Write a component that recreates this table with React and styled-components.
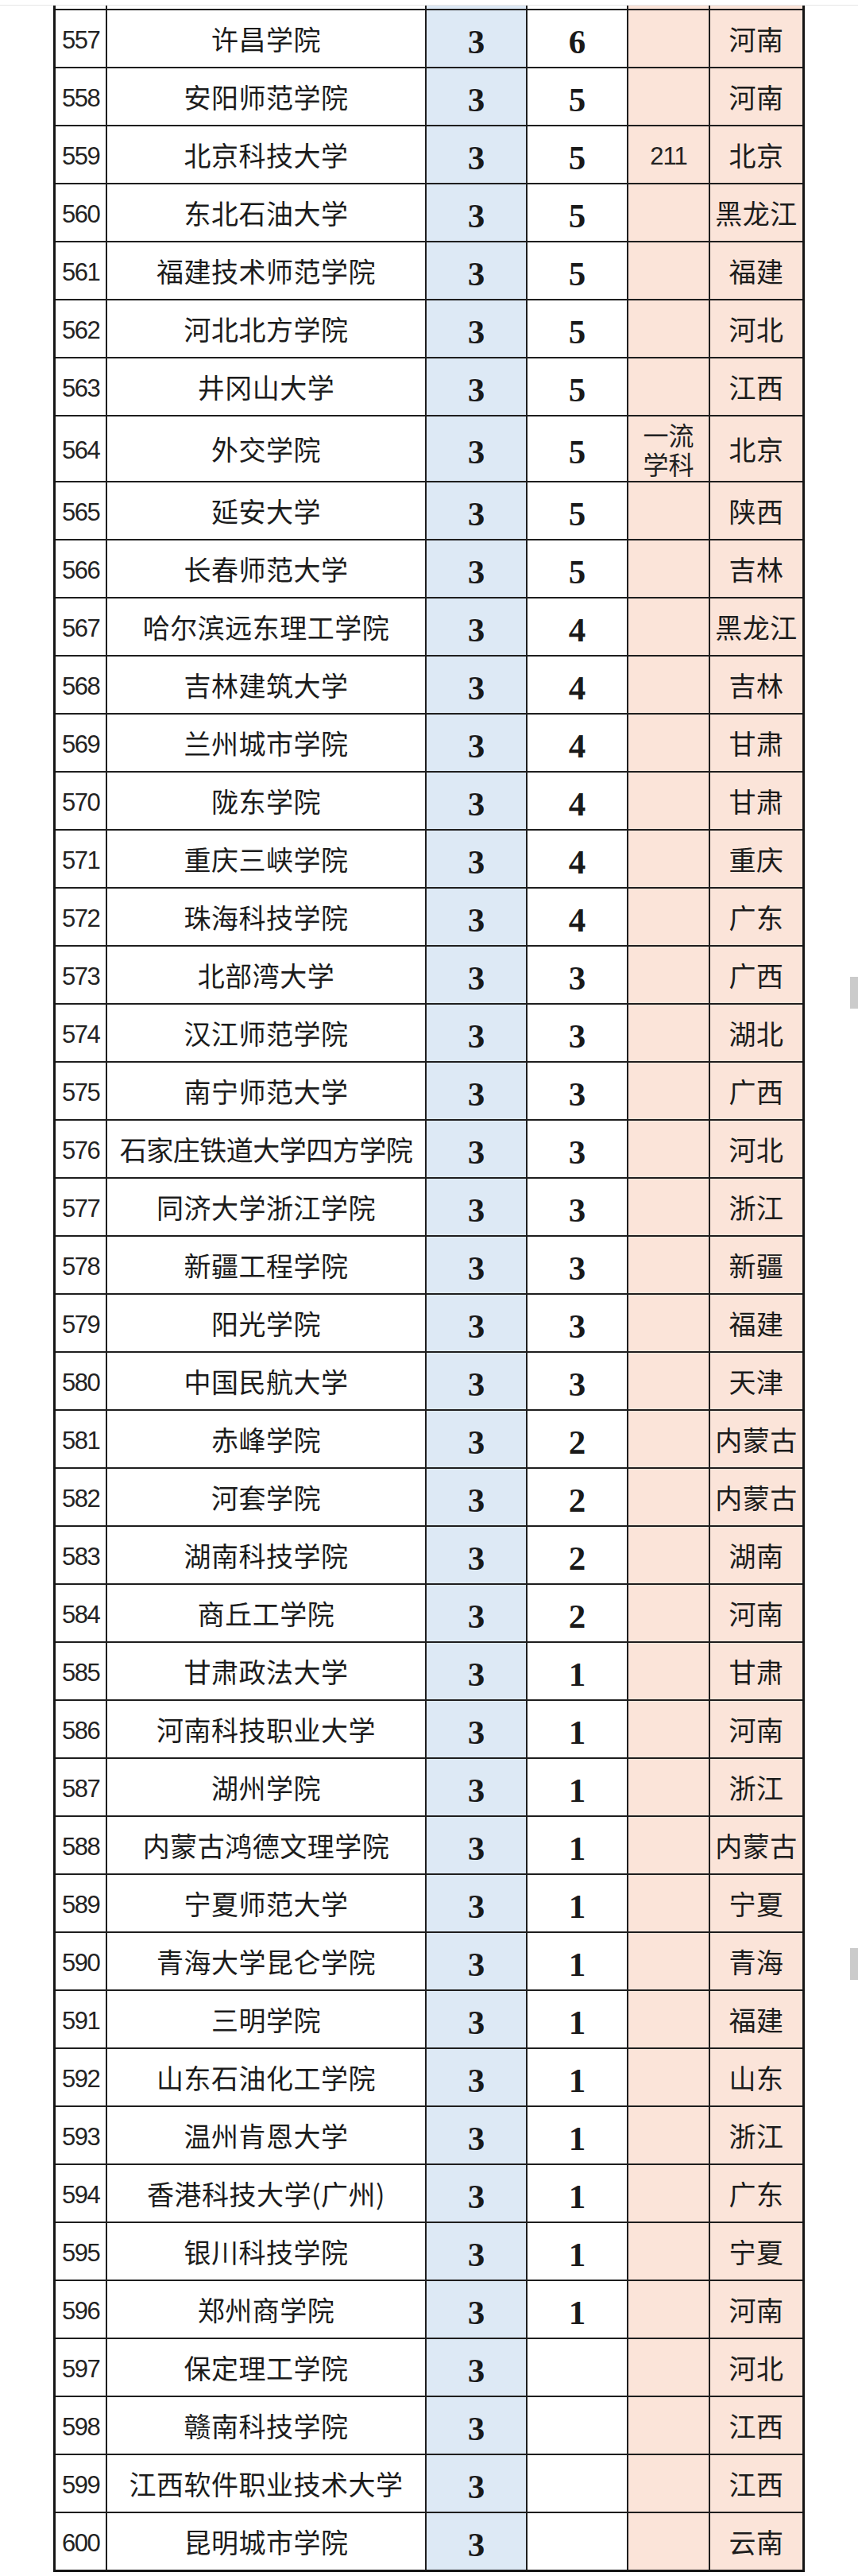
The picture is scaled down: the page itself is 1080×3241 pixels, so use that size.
import React from "react";
import styled, { createGlobalStyle } from "styled-components";

const rows = [
  [557, "许昌学院", 3, 6, "", "河南"],
  [558, "安阳师范学院", 3, 5, "", "河南"],
  [559, "北京科技大学", 3, 5, "211", "北京"],
  [560, "东北石油大学", 3, 5, "", "黑龙江"],
  [561, "福建技术师范学院", 3, 5, "", "福建"],
  [562, "河北北方学院", 3, 5, "", "河北"],
  [563, "井冈山大学", 3, 5, "", "江西"],
  [564, "外交学院", 3, 5, "一流学科", "北京"],
  [565, "延安大学", 3, 5, "", "陕西"],
  [566, "长春师范大学", 3, 5, "", "吉林"],
  [567, "哈尔滨远东理工学院", 3, 4, "", "黑龙江"],
  [568, "吉林建筑大学", 3, 4, "", "吉林"],
  [569, "兰州城市学院", 3, 4, "", "甘肃"],
  [570, "陇东学院", 3, 4, "", "甘肃"],
  [571, "重庆三峡学院", 3, 4, "", "重庆"],
  [572, "珠海科技学院", 3, 4, "", "广东"],
  [573, "北部湾大学", 3, 3, "", "广西"],
  [574, "汉江师范学院", 3, 3, "", "湖北"],
  [575, "南宁师范大学", 3, 3, "", "广西"],
  [576, "石家庄铁道大学四方学院", 3, 3, "", "河北"],
  [577, "同济大学浙江学院", 3, 3, "", "浙江"],
  [578, "新疆工程学院", 3, 3, "", "新疆"],
  [579, "阳光学院", 3, 3, "", "福建"],
  [580, "中国民航大学", 3, 3, "", "天津"],
  [581, "赤峰学院", 3, 2, "", "内蒙古"],
  [582, "河套学院", 3, 2, "", "内蒙古"],
  [583, "湖南科技学院", 3, 2, "", "湖南"],
  [584, "商丘工学院", 3, 2, "", "河南"],
  [585, "甘肃政法大学", 3, 1, "", "甘肃"],
  [586, "河南科技职业大学", 3, 1, "", "河南"],
  [587, "湖州学院", 3, 1, "", "浙江"],
  [588, "内蒙古鸿德文理学院", 3, 1, "", "内蒙古"],
  [589, "宁夏师范大学", 3, 1, "", "宁夏"],
  [590, "青海大学昆仑学院", 3, 1, "", "青海"],
  [591, "三明学院", 3, 1, "", "福建"],
  [592, "山东石油化工学院", 3, 1, "", "山东"],
  [593, "温州肯恩大学", 3, 1, "", "浙江"],
  [594, "香港科技大学(广州)", 3, 1, "", "广东"],
  [595, "银川科技学院", 3, 1, "", "宁夏"],
  [596, "郑州商学院", 3, 1, "", "河南"],
  [597, "保定理工学院", 3, "", "", "河北"],
  [598, "赣南科技学院", 3, "", "", "江西"],
  [599, "江西软件职业技术大学", 3, "", "", "江西"],
  [600, "昆明城市学院", 3, "", "", "云南"],
];

const GlobalStyle = createGlobalStyle`
  *, *::before, *::after {
    box-sizing: border-box;
  }
  html, body {
    margin: 0;
    padding: 0;
    background: #ffffff;
  }
  body {
    font-family: "Noto Sans CJK SC", "Noto Sans", sans-serif;
    color: #1c1c1c;
  }
`;

const Page = styled.div`
  position: relative;
  width: 1080px;
  min-height: 3241px;
  background: #fff;
`;

const TopEdge = styled.div`
  height: 7px;
  border-bottom: 1px solid #e6e6e6;
`;

const Sheet = styled.div`
  margin-left: 67px;
  width: 946px;
  border-left: 3px solid #151515;
  border-right: 3px solid #151515;
  border-bottom: 3px solid #151515;
`;

const Row = styled.div`
  display: grid;
  grid-template-columns: 65px 402px 127px 127px 103px 116px;
  height: ${({ $h }) => $h}px;
  border-bottom: ${({ $last }) => ($last ? "0" : "2px solid #1e1e1e")};
`;

const Cell = styled.div`
  display: flex;
  align-items: center;
  justify-content: ${({ $left }) => ($left ? "flex-start" : "center")};
  background: ${({ $tone }) =>
    $tone === "blue" ? "#dde9f5" : $tone === "pink" ? "#fbe4d9" : "#ffffff"};
  border-right: ${({ $end }) => ($end ? "0" : "2px solid #1e1e1e")};
  overflow: hidden;
`;

const Index = styled.span`
  font-family: "Liberation Sans", Arial, sans-serif;
  font-size: 31px;
  letter-spacing: -1.5px;
  padding-left: 8px;
  padding-top: 4px;
  color: #222;
`;

const Name = styled.span`
  font-size: 34px;
  white-space: nowrap;
  letter-spacing: ${({ $tight }) => ($tight ? "-0.5px" : "0.5px")};
  color: #1c1c1c;
`;

const Grade = styled.span`
  font-family: "Liberation Serif", "Times New Roman", serif;
  font-weight: 700;
  font-size: 43px;
  padding-top: 8px;
  color: #1a1a1a;
`;

const Tag = styled.span`
  font-size: ${({ $wrap }) => ($wrap ? "32px" : "31px")};
  font-family: ${({ $wrap }) =>
    $wrap ? `"Noto Sans CJK SC", sans-serif` : `"Liberation Sans", Arial, sans-serif`};
  letter-spacing: ${({ $wrap }) => ($wrap ? "0" : "-1px")};
  line-height: ${({ $wrap }) => ($wrap ? "37px" : "40px")};
  width: ${({ $wrap }) => ($wrap ? "70px" : "auto")};
  text-align: center;
  padding-top: ${({ $wrap }) => ($wrap ? "0" : "4px")};
  color: #222;
`;

const Province = styled.span`
  font-size: 34px;
  white-space: nowrap;
  letter-spacing: 0.5px;
  color: #1c1c1c;
`;

const ScrollMark = styled.div`
  position: absolute;
  right: 0;
  top: ${({ $top }) => $top}px;
  width: 10px;
  height: 40px;
  background: #cbcbcb;
`;

const App = () => {
  return (
    <Page>
      <GlobalStyle />
      <TopEdge />
      <Sheet>
        <Row $h={6}>
          <Cell />
          <Cell />
          <Cell $tone="blue" />
          <Cell />
          <Cell $tone="pink" />
          <Cell $tone="pink" $end />
        </Row>
        {rows.map(([no, name, level, score, tag, prov], i) => {
          const wrap = tag.length > 3;
          const last = i === rows.length - 1;
          return (
            <Row key={no} $h={wrap ? 83 : last ? 71 : 73} $last={last}>
              <Cell $left>
                <Index>{no}</Index>
              </Cell>
              <Cell>
                <Name $tight={name.length > 10}>{name}</Name>
              </Cell>
              <Cell $tone="blue">
                <Grade>{level}</Grade>
              </Cell>
              <Cell>
                <Grade>{score}</Grade>
              </Cell>
              <Cell $tone="pink">
                {tag && <Tag $wrap={wrap}>{tag}</Tag>}
              </Cell>
              <Cell $tone="pink" $end>
                <Province>{prov}</Province>
              </Cell>
            </Row>
          );
        })}
      </Sheet>
      <ScrollMark $top={1229} />
      <ScrollMark $top={2451} />
    </Page>
  );
};

export default App;
